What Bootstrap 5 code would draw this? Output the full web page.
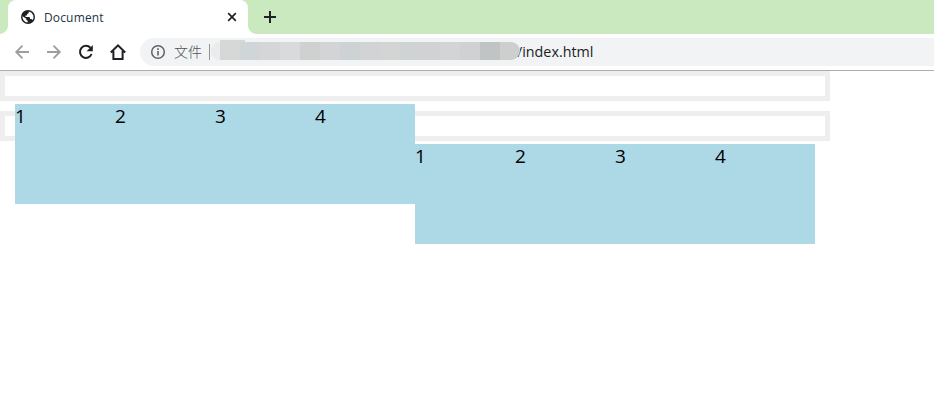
<!DOCTYPE html>
<html lang="zh-CN">
<head>
<meta charset="utf-8">
<meta name="viewport" content="width=device-width, initial-scale=1">
<title>Document</title>
<link href="https://cdn.jsdelivr.net/npm/bootstrap@5.3.0/dist/css/bootstrap.min.css" rel="stylesheet">
<style>
body{font-family:"Open Sans","Noto Sans CJK SC",sans-serif;color:#000;background:#fff;height:413px}
.strip{height:34px;background:#cbe9bf;padding-left:8px}
.tab{width:240px;height:34px;background:#fff;border-radius:8px 8px 0 0;padding:0 9px 0 13px;font:12px/34px "Open Sans",sans-serif;color:#1d3446}
.tab::before,.tab::after{content:"";position:absolute;bottom:0;width:8px;height:8px}
.tab::before{left:-8px;background:radial-gradient(circle at 0 0,transparent 7.5px,#fff 8px)}
.tab::after{right:-8px;background:radial-gradient(circle at 100% 0,transparent 7.5px,#fff 8px)}
.tab-title{margin-left:9px;padding-top:1px;letter-spacing:.15px}
.plus{margin-left:15px}
.toolbar{height:37px;border-bottom:1px solid #aeaeae;padding-left:12px}
.toolbar svg,.strip svg{flex:none;display:block}
.nav-icons{gap:12px;width:128px}
.omni{height:28px;background:#f1f3f4;border-radius:14px 0 0 14px;padding-left:10px;font-size:14px;line-height:28px;color:#202124}
.file{margin-left:8px;width:29px;padding-bottom:2px;font-family:"Noto Sans CJK SC",sans-serif;font-weight:300;color:#4f5357}
.sep{width:1px;height:16px;background:#909499;margin-left:6px}
.path{width:309px;height:18px;border-radius:9px;overflow:hidden}
.path i{width:20px;height:18px}
.path i:first-child{width:9px}
.path-wrap{margin:0 0 2px 1px}
.path-wrap::before{content:"";position:absolute;left:9px;top:-2px;width:25px;height:2px;background:#d6d7d7}
.address{margin-left:-3px;font-family:"Open Sans",sans-serif;font-size:14.3px}
.frame{width:830px;height:30px;border:5px solid #eee;margin-bottom:10px}
.items{width:400px;height:100px;margin:28px 0 0;background:#add8e6;font-size:19px;line-height:24px}
.items.float-start{margin-left:10px}
.items.float-end{margin-right:10px}
.items li{width:100px}
</style>
<script src="https://cdn.jsdelivr.net/npm/bootstrap@5.3.0/dist/js/bootstrap.bundle.min.js"></script>
</head>
<body>
<header>
<div class="strip d-flex align-items-center">
  <div class="tab position-relative d-flex align-items-center">
    <svg width="14" height="14" viewBox="0 0 14 14"><circle cx="7" cy="7" r="7" fill="#202124"/><path d="M7.7 1.6C8 3 7.4 3.7 6.2 3.9L5.8 5.5H4.5V7H8Q9 7 9 8.2V9h1.5L11.7 10A5.6 5.6 0 0 0 7.7 1.6ZM1.5 6.3 5.3 8.8V10l1.4.8v1.7A5.6 5.6 0 0 1 1.5 6.3Z" fill="#fff"/></svg>
    <span class="tab-title">Document</span>
    <svg class="ms-auto" width="14" height="14" viewBox="0 0 14 14"><path d="m3.2 3.2 7.6 7.6m0-7.6-7.6 7.6" stroke="#202124" stroke-width="1.7"/></svg>
  </div>
  <svg class="plus" width="14" height="14" viewBox="0 0 14 14"><path d="M7 1v12M1 7h12" stroke="#202124" stroke-width="2"/></svg>
</div>
<div class="toolbar d-flex align-items-center">
  <div class="nav-icons d-flex align-items-center">
    <svg width="20" height="20" viewBox="0 0 20 20" fill="none" stroke="#9b9d9f" stroke-width="1.8"><path d="M17 10H4.5M10.5 3.7 4.2 10l6.3 6.3"/></svg>
    <svg width="20" height="20" viewBox="0 0 20 20" fill="none" stroke="#9b9d9f" stroke-width="1.8"><path d="M3 10h12.5M9.5 3.7l6.3 6.3-6.3 6.3"/></svg>
    <svg width="20" height="20" viewBox="0 0 20 20"><path d="M15.6 12A6 6 0 1 1 14.4 5.8" fill="none" stroke="#202124" stroke-width="2"/><path d="M16.8 3v6.2h-6.2Z" fill="#202124"/></svg>
    <svg width="20" height="20" viewBox="0 0 20 20" fill="none" stroke="#202124" stroke-width="2"><path d="M2.8 10.5 10 3.3l7.2 7.2M5.4 9v8h9.2V9"/></svg>
  </div>
  <div class="omni d-flex align-items-center flex-grow-1">
    <svg width="16" height="16" viewBox="0 0 16 16"><circle cx="8" cy="8" r="6.3" fill="none" stroke="#5f6368" stroke-width="1.5"/><path d="M8 7v4.5M8 4.3v1.6" stroke="#5f6368" stroke-width="1.6"/></svg>
    <span class="file">文件</span>
    <span class="sep"></span>
    <div class="path-wrap position-relative"><div class="path d-flex">
      <i style="background:#eaeceb"></i><i style="background:#d6d7d7"></i><i style="background:#d0d5d8"></i><i style="background:#d5d6d8"></i><i style="background:#d9dadc"></i><i style="background:#cfd1d0"></i><i style="background:#d2d4d5"></i><i style="background:#cdd2d5"></i><i style="background:#d1d3d5"></i><i style="background:#d3d5d4"></i><i style="background:#cfd3d4"></i><i style="background:#d0d2d3"></i><i style="background:#d2d4d5"></i><i style="background:#cfd1d2"></i><i style="background:#c1c4c5"></i><i style="background:#cdcfce"></i>
    </div></div>
    <span class="address">/index.html</span>
  </div>
</div>
</header>
<main>
  <div class="frame"><ul class="items float-start list-unstyled d-flex"><li>1</li><li>2</li><li>3</li><li>4</li></ul></div>
  <div class="frame"><ul class="items float-end list-unstyled d-flex"><li>1</li><li>2</li><li>3</li><li>4</li></ul></div>
</main>
</body>
</html>
